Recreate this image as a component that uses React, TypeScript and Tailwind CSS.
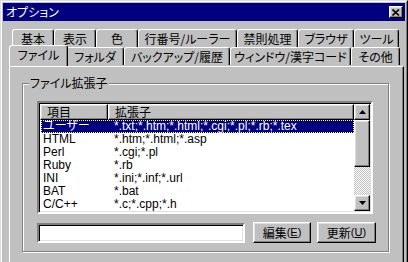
import React from 'react';

const face = 'bg-[#c0c0c0]';
const raised =
  'border border-t-white border-l-white border-r-black border-b-black shadow-[inset_-1px_-1px_0_#808080,inset_1px_1px_0_#dfdfdf]';
const latin = "font-['Liberation_Sans','Noto_Sans_CJK_JP',sans-serif]";

const row1: [string, number][] = [
  ['基本', 42],
  ['表示', 42],
  ['色', 42],
  ['行番号/ルーラー', 99],
  ['禁則処理', 61],
  ['ブラウザ', 56],
  ['ツール', 45],
];

const row2: [string, number, boolean?][] = [
  ['ファイル', 55, true],
  ['フォルダ', 58],
  ['バックアップ/履歴', 106],
  ['ウィンドウ/漢字コード', 121],
  ['その他', 49],
];

const items = [
  ['ユーザー', '*.txt;*.htm;*.html;*.cgi;*.pl;*.rb;*.tex'],
  ['HTML', '*.htm;*.html;*.asp'],
  ['Perl', '*.cgi;*.pl'],
  ['Ruby', '*.rb'],
  ['INI', '*.ini;*.inf;*.url'],
  ['BAT', '*.bat'],
  ['C/C++', '*.c;*.cpp;*.h'],
];

const Tab: React.FC<{ label: string; w: number; active?: boolean }> = ({ label, w, active }) => (
  <div
    style={{ width: active ? w + 4 : w }}
    className={`flex items-center justify-center border-l border-t border-r border-l-white border-t-white border-r-black rounded-t-[3px] shadow-[inset_-1px_0_0_#808080] ${face} ${
      active ? 'relative z-10 -mx-[2px] -mt-[2px] h-[21px] pb-[2px]' : 'h-[18px]'
    }`}
  >
    {label}
  </div>
);

const Arrow: React.FC<{ up?: boolean }> = ({ up }) => (
  <svg width="7" height="4" viewBox="0 0 7 4">
    <polygon points={up ? '3.5,0 7,4 0,4' : '0,0 7,0 3.5,4'} fill="#000" />
  </svg>
);

export default function App() {
  return (
    <div className="w-[408px] h-[262px] overflow-hidden">
      <div
        className={`w-[408px] h-[270px] ${face} border border-t-[#dfdfdf] border-l-[#dfdfdf] border-r-black border-b-black text-[12px] leading-none text-black font-['Noto_Sans_CJK_JP',sans-serif] [font-feature-settings:'palt']`}
      >
        <div className="h-full border border-t-white border-l-white border-r-[#808080] border-b-[#808080] p-[1px]">
          {/* title bar */}
          <div className="h-[18px] bg-[#000080] flex items-center justify-between pl-[3px] pr-[2px]">
            <span className="text-white text-[12px]">オプション</span>
            <div className={`w-[14px] h-[12px] flex items-center justify-center ${face} ${raised}`}>
              <svg width="8" height="7" viewBox="0 0 8 7">
                <path d="M0.5 0.5 L7 6.5 M7 0.5 L0.5 6.5" stroke="#000" strokeWidth="1.6" />
              </svg>
            </div>
          </div>

          {/* tabs */}
          <div className="mt-[8px] ml-[9px] flex">
            {row1.map(([l, w]) => (
              <Tab key={l} label={l} w={w} />
            ))}
          </div>
          <div className="ml-[8px] flex">
            {row2.map(([l, w, a]) => (
              <Tab key={l} label={l} w={w} active={a} />
            ))}
          </div>

          {/* panel */}
          <div className="ml-[6px] w-[395px] h-[200px] border border-t-white border-l-white border-r-black border-b-black shadow-[inset_-1px_-1px_0_#808080] pt-[16px] pl-[12px]">
            <div className="relative w-[367px] h-[169px] border border-[#808080] shadow-[1px_1px_0_white,inset_1px_1px_0_white] pt-[17px] pl-[14px]">
              <span className={`absolute -top-[7px] left-[6px] px-[1px] ${face}`}>ファイル拡張子</span>

              {/* list */}
              <div className="w-[336px] h-[113px] bg-white flex border-2 border-t-[#808080] border-l-[#808080] border-r-white border-b-white shadow-[inset_1px_1px_0_#000,inset_-1px_-1px_0_#dfdfdf] p-[1px]">
                <div className="flex-1 flex flex-col">
                  <div className="flex h-[17px]">
                    <div className={`w-[68px] flex items-center pl-[6px] ${face} ${raised}`}>項目</div>
                    <div className={`flex-1 flex items-center pl-[6px] ${face} ${raised}`}>拡張子</div>
                  </div>
                  {items.map(([a, b], i) => (
                    <div
                      key={a}
                      className={`h-[13px] leading-[11px] flex items-center ml-[1px] ${latin} ${
                        i === 0
                          ? 'bg-[#000080] text-white border border-dotted border-[#ffff80]'
                          : 'border border-transparent'
                      }`}
                    >
                      <span className="w-[72px] pl-[1px]">{a}</span>
                      <span>{b}</span>
                    </div>
                  ))}
                </div>
                {/* scrollbar */}
                <div className="w-[16px] flex flex-col">
                  <div className={`h-[16px] flex items-center justify-center ${face} ${raised}`}>
                    <Arrow up />
                  </div>
                  <div className={`h-[47px] ${face} ${raised}`} />
                  <div className="flex-1 bg-[repeating-conic-gradient(#c0c0c0_0_25%,#ffffff_0_50%)] bg-[length:2px_2px]" />
                  <div className={`h-[16px] flex items-center justify-center ${face} ${raised}`}>
                    <Arrow />
                  </div>
                </div>
              </div>

              {/* input + buttons */}
              <div className="mt-[8px] flex items-center">
                <div className="w-[208px] h-[20px] bg-white border-2 border-t-[#808080] border-l-[#808080] border-r-white border-b-white shadow-[inset_1px_1px_0_#000,inset_-1px_-1px_0_#dfdfdf]" />
                <div className={`ml-[8px] w-[58px] h-[21px] flex items-center justify-center ${face} ${raised}`}>
                  編集<span className={`${latin} text-[11px]`}>(<span className="underline">E</span>)</span>
                </div>
                <div className={`ml-[6px] w-[59px] h-[21px] flex items-center justify-center ${face} ${raised}`}>
                  更新<span className={`${latin} text-[11px]`}>(<span className="underline">U</span>)</span>
                </div>
              </div>
            </div>
          </div>
        </div>
      </div>
    </div>
  );
}
